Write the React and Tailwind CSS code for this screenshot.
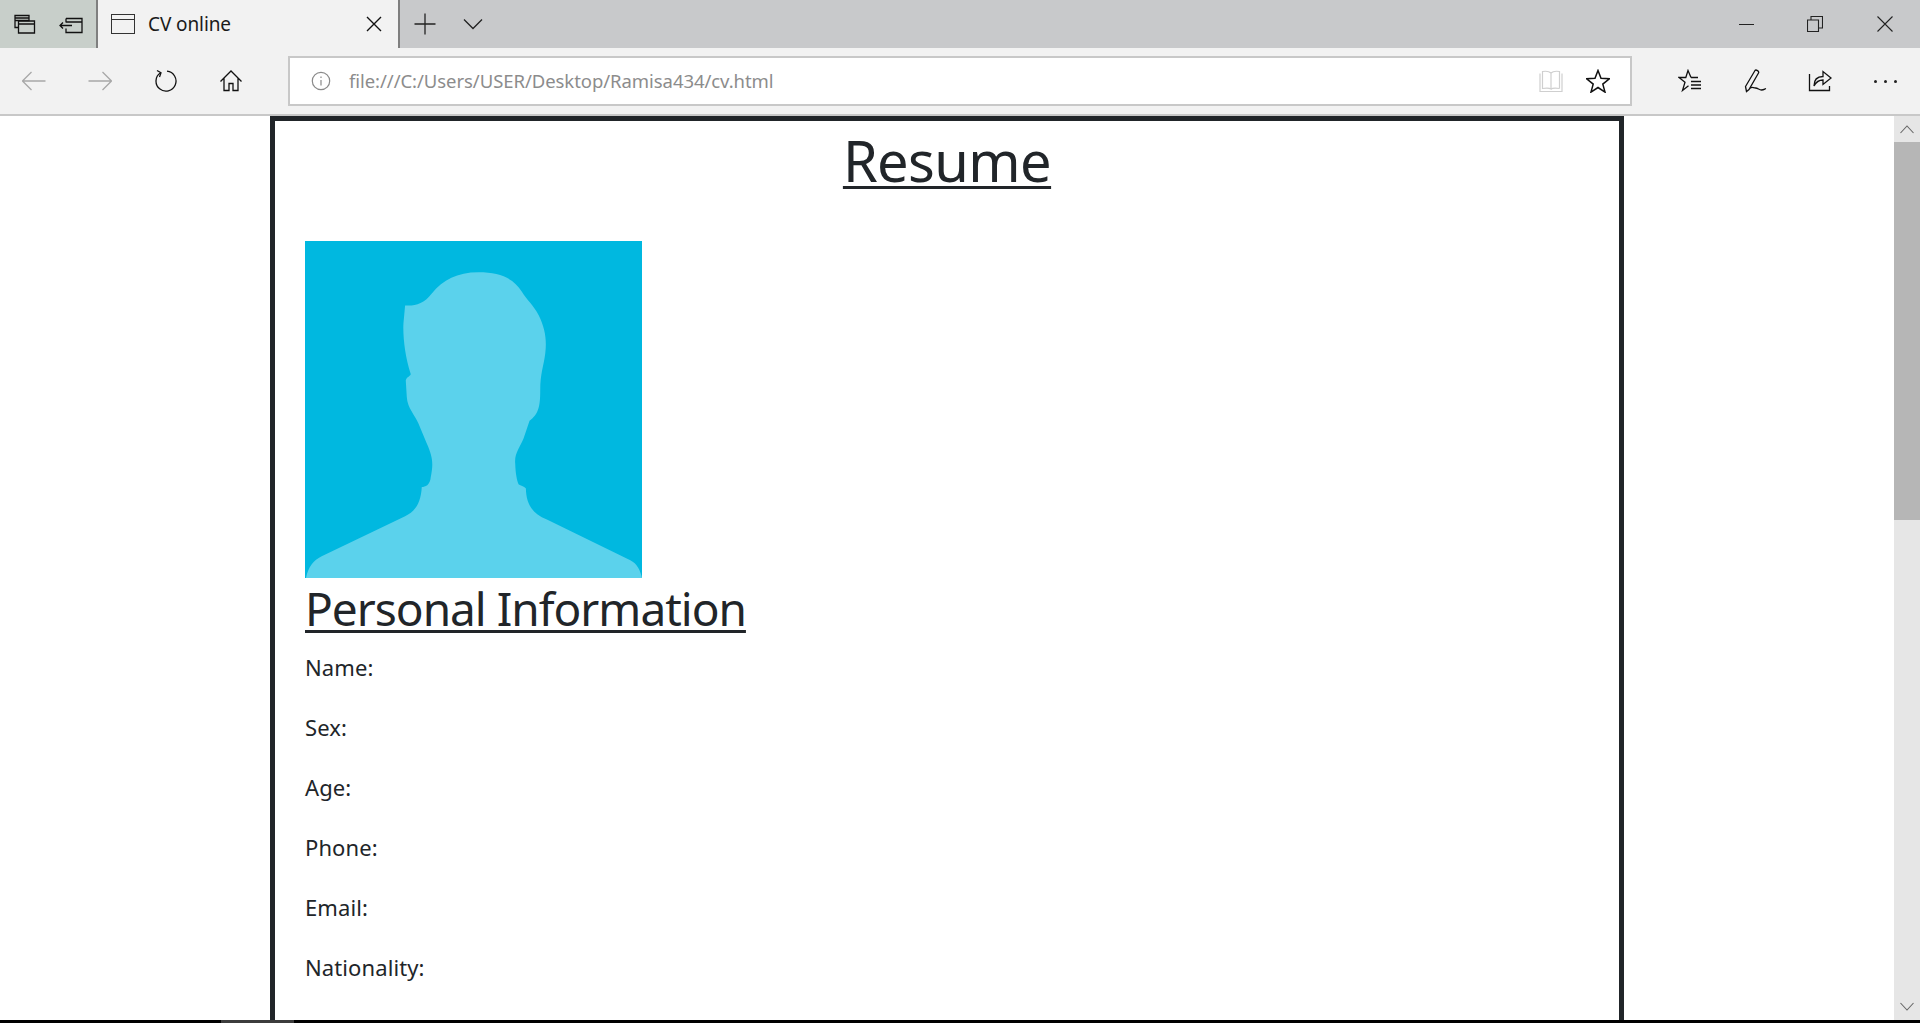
import React from "react";

const Ic = ({ w = 24, h = 24, s = "#111", sw = 1.3, children }) => (
  <svg width={w} height={h} viewBox={`0 0 ${w} ${h}`} fill="none" stroke={s} strokeWidth={sw}>
    {children}
  </svg>
);

const rows = ["Name:", "Sex:", "Age:", "Phone:", "Email:", "Nationality:", "Religion:"];

function Silhouette() {
  return (
    <svg className="block w-[337px] h-[337px]" viewBox="45 33 1010 1010">
      <rect x="45" y="33" width="1010" height="1010" fill="#00b8e0" />
      <path
        fill="#5bd2ec"
        d="M48 1043 C55 1010 70 990 95 978 L345 858 C375 843 392 820 395 770 C405 770 420 765 422 740 C430 700 428 680 410 640 L385 580 C375 555 352 535 350 500 L347 450 C350 440 358 440 362 432 C345 380 338 320 340 280 L345 226 C375 228 400 222 425 190 C460 150 500 127 565 127 C630 127 670 145 695 185 C710 210 730 225 745 255 C765 295 770 330 765 370 C760 410 750 430 750 480 C750 530 745 550 718 572 L700 625 C690 650 672 670 675 700 C676 730 680 750 685 762 C695 768 705 770 707 775 C708 820 725 850 770 868 L1020 990 C1040 1000 1050 1020 1055 1043 Z"
      />
    </svg>
  );
}

function ToolBtn({ children, className = "w-[66px]" }) {
  return <div className={`h-full flex items-center justify-center shrink-0 ${className}`}>{children}</div>;
}

export default function App() {
  return (
    <div className="h-[1023px] w-[1920px] overflow-hidden flex flex-col bg-white font-['Noto_Sans',sans-serif] text-[#212529]">
      {/* Tab strip */}
      <div className="h-12 shrink-0 flex bg-[#c8c9cb]">
        <div className="w-[96px] flex bg-[#c8cfca] border-r-2 border-[#7f7f7f] box-content">
          <ToolBtn className="w-[48px]">
            <Ic>
              <path d="M3 3.500h14v5H3zM3 3.500v12h3M3 6h14" />
              <path d="M6.500 9h16v12h-16zM6.500 12h16" />
            </Ic>
          </ToolBtn>
          <ToolBtn className="w-[46px]">
            <Ic>
              <path d="M7 6.500h16v14H7v-4M7 6.500v4M7 10h16" />
              <path d="M1 13.500h12M4 10.500l-3 3 3 3" />
            </Ic>
          </ToolBtn>
        </div>
        <div className="w-[300px] bg-[#f2f2f2] flex items-center">
          <div className="ml-[13px] w-[24px] h-[20px] border-[1.5px] border-[#333]">
            <div className="h-[5px] border-b border-[#333]" />
          </div>
          <span className="ml-[13px] text-[19px] leading-none text-[#1a1a1a] tracking-[-0.1px]">CV online</span>
          <div className="ml-auto mr-[15px]">
            <Ic w={18} h={18} sw={1.4}>
              <path d="M2 2l14 14M16 2L2 16" />
            </Ic>
          </div>
        </div>
        <div className="w-[2px] bg-[#7f7f7f]" />
        <ToolBtn className="w-[46px] ml-[2px]">
          <Ic w={22} h={22} s="#222">
            <path d="M11 0.500v21M0.500 11h21" />
          </Ic>
        </ToolBtn>
        <ToolBtn className="w-[50px]">
          <Ic w={20} h={12} s="#222">
            <path d="M1 1.500l9 9 9-9" />
          </Ic>
        </ToolBtn>
        <div className="ml-auto flex">
          <ToolBtn className="w-[68px]">
            <div className="w-[15px] h-px bg-[#222]" />
          </ToolBtn>
          <ToolBtn className="w-[69px]">
            <Ic w={16} h={16} s="#222" sw={1.1}>
              <path d="M0.500 4h11v11.500H0.500zM4 4V0.500h11.500V12H11.500" />
            </Ic>
          </ToolBtn>
          <ToolBtn className="w-[71px]">
            <Ic w={16} h={16} s="#222" sw={1.1}>
              <path d="M0.500 0.500l15 15M15.500 0.500l-15 15" />
            </Ic>
          </ToolBtn>
        </div>
      </div>

      {/* Toolbar */}
      <div className="h-[68px] shrink-0 bg-[#f2f2f2] border-b-2 border-[#c8c8c8] flex items-center pl-px">
        <ToolBtn>
          <Ic s="#a8a8a8">
            <path d="M0.500 12h23M9.500 3l-9 9 9 9" />
          </Ic>
        </ToolBtn>
        <ToolBtn>
          <Ic s="#a8a8a8">
            <path d="M0.500 12h23M14.500 3l9 9-9 9" />
          </Ic>
        </ToolBtn>
        <ToolBtn className="w-[64px]">
          <Ic>
            <path d="M7.500 3.800A10 10 0 1 0 14 2.200" />
            <path d="M4 1.500l4 2.300-1.500 4.200" />
          </Ic>
        </ToolBtn>
        <ToolBtn className="w-[68px]">
          <Ic>
            <path d="M1.500 12.500L12 2l10.500 10.500M5 9.500v12h5v-7h4v7h5v-12" />
          </Ic>
        </ToolBtn>
        <div className="ml-[23px] w-[1344px] h-[50px] bg-white border-2 border-[#c8c8c8] flex items-center">
          <div className="ml-[21px]">
            <Ic w={20} h={20} s="#8a8a8a" sw={1.2}>
              <circle cx="10" cy="10" r="8.700" />
              <path d="M10 9v5.500M10 5.500v1.500" />
            </Ic>
          </div>
          <span className="ml-[18px] text-[18.500px] leading-none text-[#8c8c8c] tracking-[-0.06px]">
            file:///C:/Users/USER/Desktop/Ramisa434/cv.html
          </span>
          <div className="ml-auto mr-[23px]">
            <Ic w={24} h={22} s="#cfcfcf" sw={1.2}>
              <path d="M1 3.500v18h22v-18M3.500 18.500V1.500c3.500-.5 7 0 8.500 1.500v16c-1.500-1-5-1-8.500-.5zM20.500 18.500V1.500c-3.500-.5-7 0-8.500 1.500" />
              <path d="M12 19c1.500-1 5-1 8.500-.5" />
            </Ic>
          </div>
          <div className="mr-[20px]">
            <Ic sw={1.5}>
              <path d="M12 1.500l3 7.800 8.300.500-6.500 5.300 2.200 8L12 18.500l-7 4.600 2.200-8L.700 9.800 9 9.300z" />
            </Ic>
          </div>
        </div>
        <ToolBtn className="w-[66px] ml-[25px]">
          <Ic>
            <path d="M13 8.500L10 1.500 7.800 8.500H1l6 4.700-2.500 8.300 6-4.700" />
            <path d="M13 8.500h7M13 12.500h10M13 16h10M13 19.500h10" />
          </Ic>
        </ToolBtn>
        <ToolBtn className="w-[66px]">
          <Ic>
            <path d="M2.500 22.500l-1-5L11 1.500c1-1.300 4.500.700 3.500 2.500L5 20.500zM5 20.500c2-4 4-1.500 6.500-1.500s3.500 2 6 2 3-1 4.500-1.500" />
          </Ic>
        </ToolBtn>
        <ToolBtn className="w-[62px]">
          <Ic>
            <path d="M1.500 5v16.500h20V17" />
            <path d="M6 17c0-6 3-9.500 9-9.500V2.500L23 9l-8 6.500v-4.500c-4 0-7 2-9 6z" />
          </Ic>
        </ToolBtn>
        <ToolBtn className="w-[68px]">
          <div className="flex gap-[7px]">
            <div className="w-[3px] h-[3px] rounded-full bg-[#222]" />
            <div className="w-[3px] h-[3px] rounded-full bg-[#222]" />
            <div className="w-[3px] h-[3px] rounded-full bg-[#222]" />
          </div>
        </ToolBtn>
      </div>

      {/* Viewport */}
      <div className="flex-1 min-h-0 flex">
        <div className="flex-1 min-w-0 overflow-hidden pl-[270px]">
          <div className="w-[1354px] border-[5px] border-[#212529] px-[30px] pt-[3px]">
            <h1 className="text-[56px] leading-[72px] text-center underline decoration-[3px] underline-offset-[4px] mb-[45px] tracking-[-0.6px]">
              Resume
            </h1>
            <Silhouette />
            <h2 className="text-[46px] leading-[60px] underline decoration-[3px] underline-offset-[4px] mb-[11px] tracking-[-1px]">
              Personal Information
            </h2>
            {rows.map((r) => (
              <p key={r} className="text-[22px] leading-[36px] mb-[24px] tracking-[0.1px]">
                {r}
              </p>
            ))}
          </div>
        </div>
        <div className="w-[26px] shrink-0 bg-[#e6e6e6] flex flex-col">
          <div className="h-[26px] flex items-center justify-center">
            <Ic w={16} h={10} s="#666" sw={1.1}>
              <path d="M1.500 9L8 2l6.500 7" />
            </Ic>
          </div>
          <div className="h-[378px] bg-[#b6b6b6]" />
          <div className="mt-auto h-[26px] flex items-center justify-center">
            <Ic w={16} h={10} s="#666" sw={1.1}>
              <path d="M1.500 1L8 8l6.500-7" />
            </Ic>
          </div>
        </div>
      </div>

      {/* Bottom edge */}
      <div className="h-[3px] shrink-0 bg-black flex">
        <div className="ml-[221px] w-[73px] bg-[#3c3c3c]" />
      </div>
    </div>
  );
}
